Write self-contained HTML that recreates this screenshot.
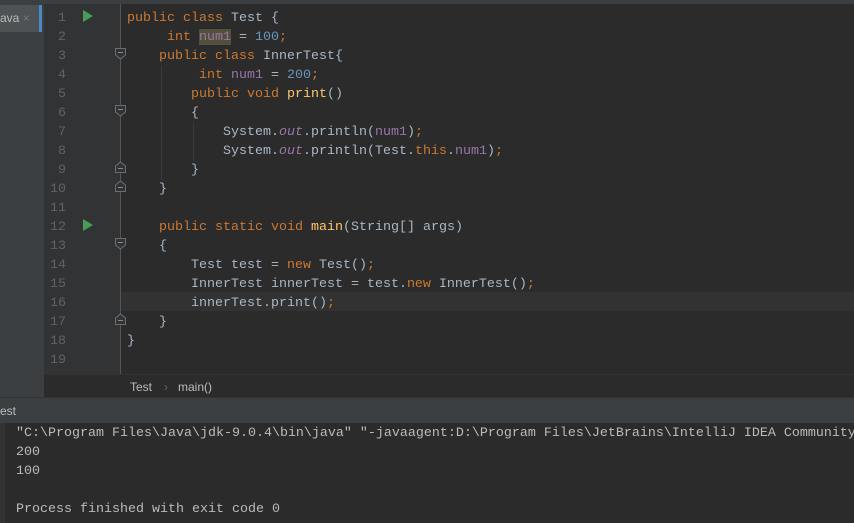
<!DOCTYPE html>
<html><head><meta charset="utf-8"><style>
*{margin:0;padding:0;box-sizing:border-box}
body{width:854px;height:523px;background:#2b2b2b;position:relative;overflow:hidden;font-family:"Liberation Mono",monospace;font-size:13.33px;color:#a9b7c6}
.abs{position:absolute}
.k{color:#cc7832}.f{color:#9876aa}.n{color:#6897bb}.m{color:#ffc66d}.i{font-style:italic;color:#9876aa}
.ln{position:absolute;left:44px;width:22px;text-align:right;color:#606366;height:19px;line-height:19px;margin-top:2px}
.cl{position:absolute;left:127px;height:19px;line-height:19px;white-space:pre;margin-top:2px}
.fold{position:absolute;left:114px;width:13px;height:13px}
.g{position:absolute;width:1px;background:#3b3b3b}
</style></head><body>
<div class="abs" style="left:0;top:0;width:44px;height:398px;background:#3c3f41"></div>
<div class="abs" style="left:0;top:5px;width:42px;height:27px;background:#4e5254;border-right:3px solid #4a88c7;color:#bbb;font-family:'Liberation Sans',sans-serif;font-size:12px;line-height:27px">ava <span style="color:#777">×</span></div>
<div class="abs" style="left:44px;top:0;width:77px;height:374px;background:#313335"></div>
<div class="abs" style="left:120px;top:0;width:1px;height:374px;background:#555"></div>
<div class="abs" style="left:0;top:0;width:854px;height:4px;background:#3c3f41"></div>
<div class="abs" style="left:121px;top:292px;width:733px;height:19px;background:#323232"></div>
<div class="g" style="left:161px;top:66px;height:114px"></div>
<div class="g" style="left:193px;top:123px;height:38px"></div>
<div class="abs" style="left:83px;top:10px;width:0;height:0;border-left:10px solid #499c54;border-top:6px solid transparent;border-bottom:6px solid transparent"></div>
<div class="abs" style="left:83px;top:219px;width:0;height:0;border-left:10px solid #499c54;border-top:6px solid transparent;border-bottom:6px solid transparent"></div>
<svg class="fold" style="top:47px" viewBox="0 0 13 13"><path d="M1.5 1.5H11.5V8L6.5 12L1.5 8Z" fill="#313335" stroke="#6e6e6e"/><path d="M4 5.5H9" stroke="#8a8a8a"/></svg>
<svg class="fold" style="top:104px" viewBox="0 0 13 13"><path d="M1.5 1.5H11.5V8L6.5 12L1.5 8Z" fill="#313335" stroke="#6e6e6e"/><path d="M4 5.5H9" stroke="#8a8a8a"/></svg>
<svg class="fold" style="top:161px" viewBox="0 0 13 13"><path d="M1.5 11.5H11.5V5L6.5 1L1.5 5Z" fill="#313335" stroke="#6e6e6e"/><path d="M4 7.5H9" stroke="#8a8a8a"/></svg>
<svg class="fold" style="top:180px" viewBox="0 0 13 13"><path d="M1.5 11.5H11.5V5L6.5 1L1.5 5Z" fill="#313335" stroke="#6e6e6e"/><path d="M4 7.5H9" stroke="#8a8a8a"/></svg>
<svg class="fold" style="top:237px" viewBox="0 0 13 13"><path d="M1.5 1.5H11.5V8L6.5 12L1.5 8Z" fill="#313335" stroke="#6e6e6e"/><path d="M4 5.5H9" stroke="#8a8a8a"/></svg>
<svg class="fold" style="top:313px" viewBox="0 0 13 13"><path d="M1.5 11.5H11.5V5L6.5 1L1.5 5Z" fill="#313335" stroke="#6e6e6e"/><path d="M4 7.5H9" stroke="#8a8a8a"/></svg>
<div class="abs" style="left:199px;top:29px;width:32px;height:16px;background:#52503a"></div>

<div class="ln" style="top:7px">1</div><div class="ln" style="top:26px">2</div><div class="ln" style="top:45px">3</div><div class="ln" style="top:64px">4</div><div class="ln" style="top:83px">5</div><div class="ln" style="top:102px">6</div><div class="ln" style="top:121px">7</div><div class="ln" style="top:140px">8</div><div class="ln" style="top:159px">9</div><div class="ln" style="top:178px">10</div><div class="ln" style="top:197px">11</div><div class="ln" style="top:216px">12</div><div class="ln" style="top:235px">13</div><div class="ln" style="top:254px">14</div><div class="ln" style="top:273px">15</div><div class="ln" style="top:292px">16</div><div class="ln" style="top:311px">17</div><div class="ln" style="top:330px">18</div><div class="ln" style="top:349px">19</div>

<div class="cl" style="top:7px"><span class="k">public class </span>Test {</div>
<div class="cl" style="top:26px">     <span class="k">int </span><span class="f">num1</span> = <span class="n">100</span><span class="k">;</span></div>
<div class="cl" style="top:45px">    <span class="k">public class </span>InnerTest{</div>
<div class="cl" style="top:64px">         <span class="k">int </span><span class="f">num1</span> = <span class="n">200</span><span class="k">;</span></div>
<div class="cl" style="top:83px">        <span class="k">public void </span><span class="m">print</span>()</div>
<div class="cl" style="top:102px">        {</div>
<div class="cl" style="top:121px">            System.<span class="i">out</span>.println(<span class="f">num1</span>)<span class="k">;</span></div>
<div class="cl" style="top:140px">            System.<span class="i">out</span>.println(Test.<span class="k">this</span>.<span class="f">num1</span>)<span class="k">;</span></div>
<div class="cl" style="top:159px">        }</div>
<div class="cl" style="top:178px">    }</div>
<div class="cl" style="top:216px">    <span class="k">public static void </span><span class="m">main</span>(String[] args)</div>
<div class="cl" style="top:235px">    {</div>
<div class="cl" style="top:254px">        Test test = <span class="k">new </span>Test()<span class="k">;</span></div>
<div class="cl" style="top:273px">        InnerTest innerTest = test.<span class="k">new </span>InnerTest()<span class="k">;</span></div>
<div class="cl" style="top:292px">        innerTest.print()<span class="k">;</span></div>
<div class="cl" style="top:311px">    }</div>
<div class="cl" style="top:330px">}</div>

<div class="abs" style="left:44px;top:374px;width:810px;height:24px;background:#2b2b2b;border-top:1px solid #333;font-family:'Liberation Sans',sans-serif;font-size:12px;line-height:24px;color:#bbb"><span style="position:absolute;left:86px">Test</span><span style="position:absolute;left:120px;color:#666">›</span><span style="position:absolute;left:134px">main()</span></div>
<div class="abs" style="left:0;top:397px;width:854px;height:26px;background:#3c3f41;border-top:1px solid #323232;font-family:'Liberation Sans',sans-serif;font-size:12px;line-height:26px;color:#bbb">est</div>
<div class="abs" style="left:0;top:423px;width:5px;height:100px;background:#313335"></div>
<div class="abs" style="left:16px;top:424px;line-height:19px;white-space:pre;color:#bbbbbb">"C:\Program Files\Java\jdk-9.0.4\bin\java" "-javaagent:D:\Program Files\JetBrains\IntelliJ IDEA Community
200
100

Process finished with exit code 0</div>
</body></html>
